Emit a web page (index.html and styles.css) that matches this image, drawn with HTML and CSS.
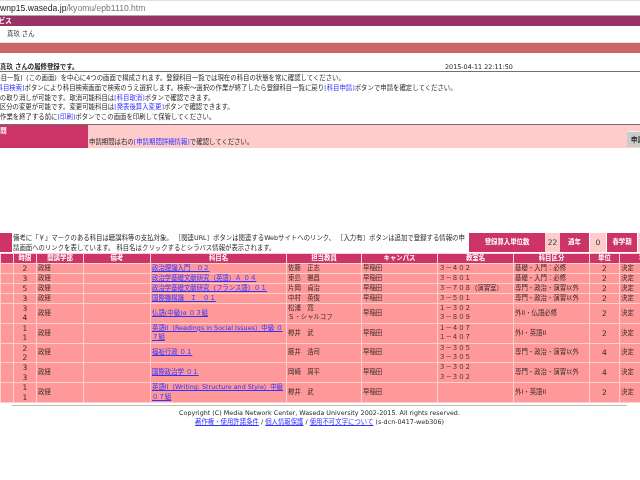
FILE: index.html
```html
<!DOCTYPE html>
<html lang="ja">
<head>
  <meta charset="UTF-8">
  <title>履修登録</title>
  <link rel="stylesheet" href="styles.css">
</head>
<body>
  <div class="urlbar"><span class="domain">wnp15.waseda.jp</span>/kyomu/epb1110.htm</div>
  <div class="service-bar"><span class="clip-service">サービス</span></div>
  <div class="greeting">真玖 さん</div>
  <div class="sub-bar"></div>

  <div class="title-row">
    <strong>真玖 さんの履修登録です。</strong>
    <span class="stamp">2015-04-11 22:11:50</span>
  </div>

  <div class="notes">
    <div class="note-1">[登録科目一覧]（この画面）を中心に4つの画面で構成されます。登録科目一覧では現在の科目の状態を常に確認してください。</div>
    <div class="note-2"><a href="#" class="plain">[科目検索]</a>ボタンにより科目検索画面で検索のうえ選択します。検索～選択の作業が終了したら登録科目一覧に戻り<a href="#" class="plain">[科目申請]</a>ボタンで申請を確定してください。</div>
    <div class="note-3">科目の取り消しが可能です。取消可能科目は<a href="#" class="plain">[科目取消]</a>ボタンで確認できます。</div>
    <div class="note-3">科目区分の変更が可能です。変更可能科目は<a href="#" class="plain">[発表後算入変更]</a>ボタンで確認できます。</div>
    <div>作業を終了する前に<a href="#" class="plain">[印刷]</a>ボタンでこの画面を印刷して保管してください。</div>
  </div>

  <div class="period">
    <div class="period-head"><span class="clip-period">申請期間</span></div>
    <div class="period-body">
      <span>申請期間は右の<a href="#" class="plain">[申請期間詳細情報]</a>で確認してください。</span>
      <button class="apply-btn">申請</button>
    </div>
  </div>

  <div class="info-row">
    <div class="info-mark"></div>
    <div class="info-text">備考に「￥」マークのある科目は聴講料等の支払対象。 ［関連URL］ボタンは関連するWebサイトへのリンク、 ［入力有］ボタンは追加で登録する情報の申<br>請画面へのリンクを表しています。 科目名はクリックするとシラバス情報が表示されます。</div>
    <div class="stats">
      <div class="stat-label stat-total">登録算入単位数</div>
      <div class="stat-value stat-v1">22</div>
      <div class="stat-label stat-year">通年</div>
      <div class="stat-value stat-v2">0</div>
      <div class="stat-label stat-spring">春学期</div>
      <div class="stat-value stat-v3">2</div>
    </div>
  </div>

  <div class="table-wrap">
    <table class="courses">
      <colgroup>
        <col class="c0"><col class="c1"><col class="c2"><col class="c3"><col class="c4"><col class="c5">
        <col class="c6"><col class="c7"><col class="c8"><col class="c9"><col class="c10">
      </colgroup>
      <tr class="short">
        <th></th><th>時限</th><th>開講学部</th><th>備考</th><th>科目名</th><th>担当教員</th>
        <th>キャンパス</th><th>教室名</th><th>科目区分</th><th>単位</th><th>状況</th>
      </tr>
      <tr class="short">
        <td></td><td class="mid">2</td><td>政経</td><td></td><td><a href="#">政治理論入門　０２</a></td><td>佐藤　正志</td>
        <td>早稲田</td><td>３－４０２</td><td>基礎・入門：必修</td><td class="mid">2</td><td>決定</td>
      </tr>
      <tr class="short">
        <td></td><td class="mid">3</td><td>政経</td><td></td><td><a href="#">政治学基礎文献研究（英語）Ａ ０４</a></td><td>東島　雅昌</td>
        <td>早稲田</td><td>３－８０１</td><td>基礎・入門：必修</td><td class="mid">2</td><td>決定</td>
      </tr>
      <tr class="short">
        <td></td><td class="mid">5</td><td>政経</td><td></td><td><a href="#">政治学基礎文献研究（フランス語）０１</a></td><td>片岡　貞治</td>
        <td>早稲田</td><td>３－７０８（演習室）</td><td>専門・政治・演習以外</td><td class="mid">2</td><td>決定</td>
      </tr>
      <tr class="short">
        <td></td><td class="mid">3</td><td>政経</td><td></td><td><a href="#">国際機構論　Ｉ　０１</a></td><td>中村　英俊</td>
        <td>早稲田</td><td>３－５０１</td><td>専門・政治・演習以外</td><td class="mid">2</td><td>決定</td>
      </tr>
      <tr>
        <td></td><td class="mid">3<br>4</td><td>政経</td><td></td><td><a href="#">仏語(中級)α ０３組</a></td><td>松浦　寛<br>Ｓ・シャルコフ</td>
        <td>早稲田</td><td>１－３０２<br>３－８０９</td><td>外II・仏語必修</td><td class="mid">2</td><td>決定</td>
      </tr>
      <tr>
        <td></td><td class="mid">1<br>1</td><td>政経</td><td></td><td><a href="#">英語II（Readings in Social Issues）中級 ０<br>７組</a></td><td>樽井　武</td>
        <td>早稲田</td><td>１－４０７<br>１－４０７</td><td>外I・英語II</td><td class="mid">2</td><td>決定</td>
      </tr>
      <tr>
        <td></td><td class="mid">2<br>2</td><td>政経</td><td></td><td><a href="#">福祉行政 ０１</a></td><td>藤井　浩司</td>
        <td>早稲田</td><td>３－３０５<br>３－３０５</td><td>専門・政治・演習以外</td><td class="mid">4</td><td>決定</td>
      </tr>
      <tr>
        <td></td><td class="mid">3<br>3</td><td>政経</td><td></td><td><a href="#">国際政治学 ０１</a></td><td>岡崎　周平</td>
        <td>早稲田</td><td>３－３０２<br>３－３０２</td><td>専門・政治・演習以外</td><td class="mid">4</td><td>決定</td>
      </tr>
      <tr>
        <td></td><td class="mid">1<br>1</td><td>政経</td><td></td><td><a href="#">英語II（Writing: Structure and Style）中級<br>０７組</a></td><td>樽井　武</td>
        <td>早稲田</td><td></td><td>外I・英語II</td><td class="mid">2</td><td>決定</td>
      </tr>
    </table>
  </div>

  <div class="footer">
    <div>Copyright (C) Media Network Center, Waseda University 2002-2015. All rights reserved.</div>
    <div><a href="#">著作権・使用許諾条件</a> / <a href="#">個人情報保護</a> / <a href="#">使用不可文字について</a> (s-dcn-0417-web306)</div>
  </div>
</body>
</html>
```

FILE: styles.css
```css
html,
body {
  margin: 0;
  height: 480px;
  overflow: hidden;
  background: #fff;
}

body {
  width: 640px;
  font-family: "DejaVu Sans", "Noto Sans CJK JP", sans-serif;
  font-size: 6.4px;
  color: #2a2a2a;
  filter: blur(0.25px);
}

a {
  color: #3333ff;
}

a.plain {
  text-decoration: none;
}

.urlbar {
  height: 14px;
  border-top: 1px solid #dde0e4;
  border-bottom: 1px solid #aaa;
  font-family: "Liberation Sans", sans-serif;
  font-size: 8.6px;
  line-height: 15px;
  color: #777;
  white-space: nowrap;
}

.domain {
  color: #222;
}

.service-bar {
  height: 10px;
  overflow: hidden;
  background: #993366;
  color: #fff;
  line-height: 10px;
  font-weight: bold;
}

.clip-service {
  display: block;
  margin-left: -14px;
}

.greeting {
  height: 16px;
  padding-left: 7px;
  line-height: 16px;
  border-bottom: 1px solid #eedddd;
}

.sub-bar {
  height: 10px;
  background: #cc6666;
}

.title-row {
  display: flex;
  height: 18px;
  line-height: 28px;
  border-bottom: 1px solid #776e6e;
  overflow: hidden;
  white-space: nowrap;
  color: #1a1a1a;
}

.title-row strong {
  width: 445px;
}

.notes {
  height: 50px;
  padding-top: 2px;
  line-height: 9.75px;
  white-space: nowrap;
  overflow: hidden;
}

.note-1 {
  margin-left: -21px;
}

.note-2 {
  margin-left: -6px;
}

.note-3 {
  margin-left: -13px;
}

.period {
  display: flex;
  height: 23px;
  border-top: 1px solid #776e6e;
  overflow: hidden;
}

.period-head {
  flex: 0 0 88px;
  background: #cc3366;
  color: #fff;
  font-weight: bold;
  line-height: 13px;
  overflow: hidden;
}

.clip-period {
  display: block;
  margin-left: -19px;
}

.period-body {
  display: flex;
  flex: 1;
  min-width: 0;
  background: #ffcccc;
  padding-left: 1px;
  line-height: 34px;
  white-space: nowrap;
}

.period-body span {
  flex: 0 0 538px;
}

.apply-btn {
  flex: 0 0 30px;
  height: 16px;
  margin-top: 6px;
  padding: 0 0 0 4px;
  border: 0;
  border-top: 1px solid #eee;
  background: #cccccc;
  color: #222;
  font: bold 6.4px "Noto Sans CJK JP", sans-serif;
  text-align: left;
}

.info-row {
  display: flex;
  height: 19px;
  margin-top: 85px;
  margin-bottom: 1px;
}

.info-mark {
  width: 12px;
  background: #cc3366;
}

.info-text {
  width: 457px;
  padding-left: 1px;
  box-sizing: border-box;
  line-height: 10px;
  white-space: nowrap;
  overflow: hidden;
}

.stats {
  display: flex;
  flex: 1;
  line-height: 19px;
  text-align: center;
  overflow: hidden;
}

.stat-label {
  background: #cc3366;
  color: #fff;
  font-weight: bold;
}

.stat-value {
  background: #ffcccc;
  color: #333;
  font-size: 7.5px;
}

.stat-total { flex: 0 0 76px; }
.stat-v1 { flex: 0 0 15px; }
.stat-year { flex: 0 0 29px; }
.stat-v2 { flex: 0 0 16px; margin-left: 1px; }
.stat-spring { flex: 0 0 30px; margin-left: 1px; }
.stat-v3 { flex: 0 0 10px; margin-left: 1px; }

.table-wrap {
  overflow: hidden;
}

.courses {
  width: 671px;
  table-layout: fixed;
  border-collapse: collapse;
  line-height: 9.4px;
}

.c0 { width: 13px; }
.c1 { width: 23px; }
.c2 { width: 47px; }
.c3 { width: 67px; }
.c4 { width: 136px; }
.c5 { width: 75px; }
.c6 { width: 76px; }
.c7 { width: 76px; }
.c8 { width: 76px; }
.c9 { width: 30px; }
.c10 { width: 52px; }

.courses th,
.courses td {
  padding: 0 1px;
  border: 1px solid #ffd0d0;
  white-space: nowrap;
  overflow: hidden;
}

.courses th {
  background: #cc3366;
  color: #fff;
  font-weight: bold;
  text-align: center;
}

.courses td {
  background: #ff9999;
  color: #3a2a2a;
}

.courses tr.short th,
.courses tr.short td {
  line-height: 9px;
}

.courses .mid {
  text-align: center;
  font-size: 7.5px;
}

.footer {
  width: 615px;
  margin: 2px 0 0 12px;
  padding-top: 3px;
  border-top: 1px solid #bbb;
  font-size: 6.4px;
  line-height: 9px;
  text-align: center;
  white-space: nowrap;
}
```
